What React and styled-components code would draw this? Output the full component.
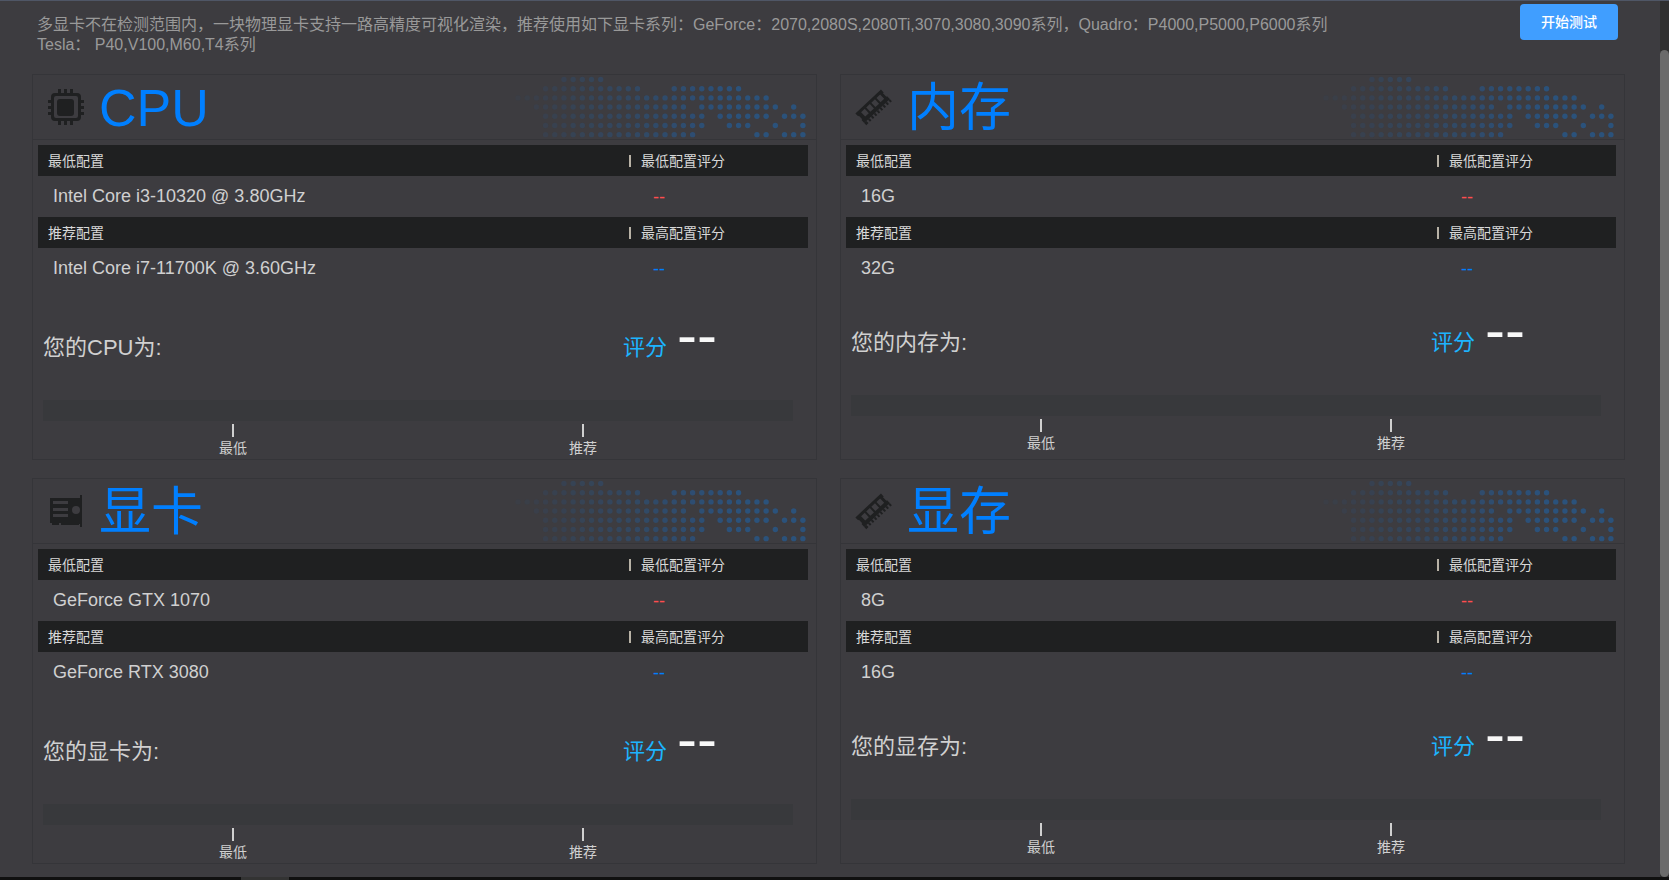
import React from 'react';
import styled, { createGlobalStyle } from 'styled-components';

const GlobalStyle = createGlobalStyle`
  * {
    box-sizing: border-box;
  }

  body {
    margin: 0;
    background: #3d3c40;
    color: #d0d0d0;
    font-family: 'Liberation Sans', 'Noto Sans CJK SC', sans-serif;
  }
`;

const Page = styled.div`
  display: flex;
  flex-direction: column;
  min-height: 100vh;
  border-top: 1px solid #4f5666;
`;

const Body = styled.div`
  display: flex;
  flex: 1;
`;

const Content = styled.main`
  flex: 1;
  padding: 0 35px 13px 32px;
`;

const ScrollTrack = styled.div`
  display: flex;
  width: 9px;
  padding-top: 49px;
  background: #2f2f2f;
`;

const ScrollThumb = styled.div`
  flex: 1;
  border-radius: 5px;
  background: #6b6b6b;
`;

const BottomBar = styled.div`
  height: 3px;
  padding-left: 241px;
  background: #101010;
`;

const BottomThumb = styled.div`
  width: 48px;
  height: 3px;
  background: #333333;
`;

const TopBar = styled.header`
  display: flex;
  align-items: flex-start;
  justify-content: space-between;
  height: 73px;
  padding: 3px 7px 0 5px;
`;

const Notice = styled.p`
  margin: 11px 0 0;
  color: #999999;
  font-size: 16px;
  line-height: 20px;
`;

const StartButton = styled.button`
  width: 98px;
  height: 36px;
  padding: 0 0 2px;
  border: 0;
  border-radius: 4px;
  background: #409eff;
  color: #ffffff;
  font-family: inherit;
  font-size: 14px;
  font-weight: 500;
  cursor: pointer;
`;

const Cards = styled.div`
  display: grid;
  grid-template-columns: 1fr 1fr;
  gap: 18px 23px;
`;

const Card = styled.section`
  display: flex;
  flex-direction: column;
  min-height: 386px;
  border: 1px solid #353539;
`;

const CardHead = styled.div`
  display: flex;
  align-items: center;
  height: 65px;
  padding: 0 9px 0 13px;
  border-bottom: 1px solid #353539;

  > svg:last-child {
    margin-left: auto;
  }
`;

const CardTitle = styled.h2`
  margin: 0 0 0 13px;
  padding-top: 2px;
  color: #007fff;
  font-size: 52px;
  font-weight: 400;
  line-height: 62px;
`;

const SpecTable = styled.table`
  width: calc(100% - 13px);
  margin: 5px 8px 0 5px;
  border-collapse: collapse;
  table-layout: fixed;
  text-align: left;

  th {
    height: 31px;
    padding: 0 10px 2px;
    background: #1f2021;
    color: #d8d8d8;
    font-size: 14px;
    font-weight: 400;
  }

  td {
    height: 41px;
    padding: 0 15px;
    font-size: 18px;
  }

  th:last-child {
    width: 182px;
    padding: 0 0 2px;
  }
`;

const Divider = styled.span`
  display: inline-block;
  width: 2px;
  height: 12px;
  margin: 0 10px 0 3px;
  background: #b8b2a6;
  vertical-align: -1px;
`;

const ScoreCell = styled.td`
  && {
    padding: 2px 0 0 27px;
    color: ${({ $color }) => $color};
  }
`;

const ResultRow = styled.div`
  display: flex;
  align-items: center;
  justify-content: space-between;
  height: 60px;
  margin: ${({ $compact }) => ($compact ? '21px' : '26px')} 10px 0;
  font-size: 22px;
`;

const Score = styled.div`
  display: flex;
  align-items: center;
  width: 183px;
  color: #1cb4ff;
`;

const ScoreValue = styled.span`
  margin: 0 0 20px 10px;
  color: #f8f8f8;
  font-size: 60px;
  line-height: 46px;
`;

const Gauge = styled.div`
  margin: 25px 23px 0 10px;
`;

const Track = styled.div`
  height: 21px;
  background: #38393c;
`;

const Marks = styled.div`
  display: grid;
  grid-template-columns: 38fr 32fr 5fr;
  margin-top: 3px;
`;

const Mark = styled.span`
  display: flex;
  flex-direction: column;
  align-items: center;
  font-size: 14px;
  line-height: 20px;

  &::before {
    width: 2px;
    height: 13px;
    margin-bottom: 1px;
    background: #d0d0d0;
    content: '';
  }
`;

const CpuIcon = () => (
  <svg width="40" height="40" viewBox="0 0 40 40" fill="#1f2021">
    <path
      fillRule="evenodd"
      d="M9 6h22a4 4 0 0 1 4 4v20a4 4 0 0 1-4 4H9a4 4 0 0 1-4-4V10a4 4 0 0 1 4-4zm1 3a2 2 0 0 0-2 2v18a2 2 0 0 0 2 2h20a2 2 0 0 0 2-2V11a2 2 0 0 0-2-2z"
    />
    <rect x="11" y="12" width="17" height="17" rx="3" />
    <path d="M12 2h3v5h-3zM18 2h3v5h-3zM24 2h3v5h-3zM12 33h3v5h-3zM18 33h3v5h-3zM24 33h3v5h-3zM2 13h4v3H2zM2 19h4v3H2zM2 25h4v3H2zM34 13h4v3h-4zM34 19h4v3h-4zM34 25h4v3h-4z" />
  </svg>
);

const GpuIcon = () => (
  <svg width="40" height="40" viewBox="0 0 40 40" fill="#1f2021">
    <path
      fillRule="evenodd"
      d="M4 7h30V4h2v32h-2v-3h-1v1H15v-2h-2v2H6v-2H4zM7 10v3h15v-3zm0 7v3h15v-3zm0 6v3h15v-3zm23-8a4 4 0 1 0 0 8 4 4 0 0 0 0-8z"
    />
  </svg>
);

const MemoryIcon = () => (
  <svg width="40" height="40" viewBox="0 0 40 40" fill="#1f2021">
    <g transform="rotate(-43 20 20)">
      <path
        fillRule="evenodd"
        d="M2 12h35v4h-1v5h1v4H2v-4h1v-5H2zm5 3v6h5v-6zm7 0v6h5v-6zm7 0v6h5v-6zm7 0v6h5v-6z"
      />
      <path d="M2 25h3v3H2zM7 25h2v3H7zM11 25h2v3h-2zM15 25h2v3h-2zM19 25h2v3h-2zM23 25h2v3h-2zM27 25h2v3h-2zM31 25h2v3h-2zM35 25h2v3h-2z" />
    </g>
  </svg>
);

// column ranges of the dots in each row
const dotRows = [
  [[5, 9]],
  [[3, 13], [17, 24]],
  [[0, 27]],
  [[2, 18], [20, 28], [30, 30]],
  [[3, 20], [22, 27], [29, 31]],
  [[3, 20], [23, 25], [28, 28], [31, 31]],
  [[3, 19], [26, 27], [29, 31]],
];

const DotMap = () => (
  <svg width="292" height="62" viewBox="0 0 292 62" fill="#27578a" aria-hidden="true">
    {dotRows.map((ranges, row) =>
      ranges.map(([from, to]) =>
        Array.from({ length: to - from + 1 }, (_, i) => from + i).map((col) => (
          <circle
            key={`${row}-${col}`}
            cx={3 + col * 9.19}
            cy={3.5 + row * 9.19}
            r="2.7"
            opacity={Math.min(0.8, 0.08 + col * 0.031)}
          />
        ))
      )
    )}
  </svg>
);

const devices = [
  { name: 'CPU', Icon: CpuIcon, min: 'Intel Core i3-10320 @ 3.80GHz', best: 'Intel Core i7-11700K @ 3.60GHz' },
  { name: '内存', Icon: MemoryIcon, min: '16G', best: '32G', compact: true },
  { name: '显卡', Icon: GpuIcon, min: 'GeForce GTX 1070', best: 'GeForce RTX 3080' },
  { name: '显存', Icon: MemoryIcon, min: '8G', best: '16G', compact: true },
];

const DeviceCard = ({ name, Icon, min, best, compact }) => (
  <Card>
    <CardHead>
      <Icon />
      <CardTitle>{name}</CardTitle>
      <DotMap />
    </CardHead>
    <SpecTable>
      <tbody>
        <tr>
          <th>最低配置</th>
          <th><Divider />最低配置评分</th>
        </tr>
        <tr>
          <td>{min}</td>
          <ScoreCell $color="#ff4d4f">--</ScoreCell>
        </tr>
        <tr>
          <th>推荐配置</th>
          <th><Divider />最高配置评分</th>
        </tr>
        <tr>
          <td>{best}</td>
          <ScoreCell $color="#007fff">--</ScoreCell>
        </tr>
      </tbody>
    </SpecTable>
    <ResultRow $compact={compact}>
      <span>您的{name}为:</span>
      <Score>
        评分
        <ScoreValue>--</ScoreValue>
      </Score>
    </ResultRow>
    <Gauge>
      <Track />
      <Marks>
        <Mark>最低</Mark>
        <Mark>推荐</Mark>
      </Marks>
    </Gauge>
  </Card>
);

const App = () => (
  <>
    <GlobalStyle />
    <Page>
      <Body>
        <Content>
          <TopBar>
            <Notice>
              多显卡不在检测范围内，一块物理显卡支持一路高精度可视化渲染，推荐使用如下显卡系列：GeForce：2070,2080S,2080Ti,3070,3080,3090系列，Quadro：P4000,P5000,P6000系列
              <br />
              Tesla： P40,V100,M60,T4系列
            </Notice>
            <StartButton type="button">开始测试</StartButton>
          </TopBar>
          <Cards>
            {devices.map((device) => (
              <DeviceCard key={device.name} {...device} />
            ))}
          </Cards>
        </Content>
        <ScrollTrack>
          <ScrollThumb />
        </ScrollTrack>
      </Body>
      <BottomBar>
        <BottomThumb />
      </BottomBar>
    </Page>
  </>
);

export default App;
